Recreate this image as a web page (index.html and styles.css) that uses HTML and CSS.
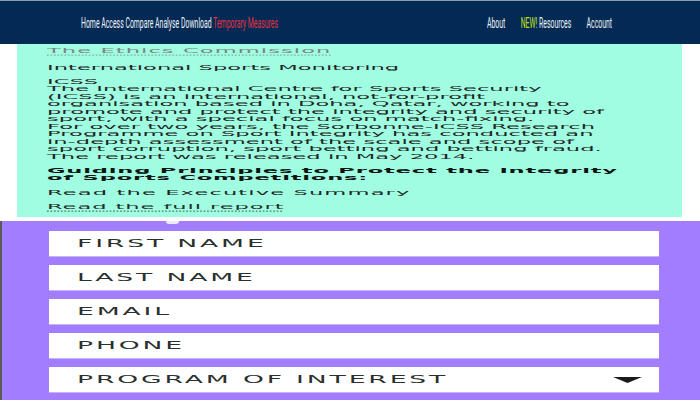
FILE: index.html
```html
<!DOCTYPE html>
<html lang="en">
<head>
<meta charset="utf-8">
<title>ICSS</title>
<link rel="stylesheet" href="styles.css">
</head>
<body>
<header class="topbar">
  <nav class="nav-main">
    <span class="nav-scale">Home Access Compare Analyse Download <a class="nav-red" href="#">Temporary Measures</a></span>
  </nav>
  <nav class="nav-side">
    <span class="nav-scale nav-items">
      <a href="#">About</a>
      <a href="#"><span class="nav-new">NEW!</span> Resources</a>
      <a href="#">Account</a>
    </span>
  </nav>
</header>
<main>
  <section class="info">
    <div class="info-text">
      <p class="line-link"><a class="dotted" href="#">The Ethics Commission</a></p>
      <p class="line-intl">International Sports Monitoring</p>
      <p class="line-para">ICSS<br>The International Centre for Sports Security<br>(ICSS) is an international, not-for-profit<br>organisation based in Doha, Qatar, working to<br>promote and protect the integrity and security of<br>sport, with a special focus on match-fixing.<br>For over two years, the Sorbonne-ICSS Research<br>Programme on Sport Integrity has conducted an<br>in-depth assessment of the scale and scope of<br>sport corruption, sport betting and betting fraud.<br>The report was released in May 2014.</p>
      <p class="line-bold">Guiding Principles to Protect the Integrity<br>of Sports Competitions:</p>
      <p class="line-exec">Read the Executive Summary</p>
      <p class="line-full"><a class="dotted" href="#">Read the full report</a></p>
    </div>
  </section>
  <section class="signup">
    <form class="form">
      <div class="field"><span class="field-label">FIRST NAME</span></div>
      <div class="field"><span class="field-label">LAST NAME</span></div>
      <div class="field"><span class="field-label">EMAIL</span></div>
      <div class="field"><span class="field-label">PHONE</span></div>
      <div class="field field-select"><span class="field-label">PROGRAM OF INTEREST</span>
        <svg class="caret" width="29" height="6" viewBox="0 0 29 6"><polygon points="0,0 29,0 14.5,6" fill="#1c1c1c"/></svg>
      </div>
    </form>
  </section>
</main>
</body>
</html>
```
FILE: styles.css
```css
html, body {
  margin: 0;
  padding: 0;
  background: #ffffff;
  height: 400px;
  overflow: hidden;
}

.topbar {
  display: flex;
  align-items: center;
  height: 43px;
  border-top: 1px solid #8f9aa8;
  background: #022a55;
  padding-left: 81px;
  font-family: Roboto, "Liberation Sans", sans-serif;
  font-size: 13.5px;
  color: #eef2f7;
}

.topbar a {
  color: #eef2f7;
  text-decoration: none;
}

.nav-main {
  flex: 0 0 406px;
  white-space: nowrap;
}

.nav-side {
  flex: 0 0 auto;
  white-space: nowrap;
}

.nav-scale {
  display: inline-block;
  transform: scale(0.51, 1.05);
  transform-origin: left center;
}

.nav-items {
  display: inline-flex;
  gap: 30px;
}

.topbar .nav-red {
  color: #e2323f;
}

.nav-new {
  color: #c8e01c;
}

.info {
  height: 173px;
  margin: 0 18px 4px 17px;
  padding-left: 30px;
  background: #a0fde1;
  overflow: hidden;
}

.info-text {
  width: 370px;
  padding-top: 4.5px;
  font-family: "DejaVu Sans", Verdana, sans-serif;
  font-size: 13px;
  line-height: 12px;
  color: #1e2723;
  white-space: nowrap;
  transform: scale(1.74, 0.6);
  transform-origin: 0 0;
}

.info-text p {
  margin: 0;
}

.dotted {
  color: #7b8682;
  letter-spacing: 0.6px;
  text-decoration: underline dotted;
  text-underline-offset: 3px;
}

.line-full .dotted {
  color: #26302c;
  letter-spacing: 0.52px;
}

.line-intl {
  margin-top: 16.3px !important;
}

.line-para {
  margin-top: 11.4px !important;
  line-height: 12.5px;
}

.line-bold {
  margin-top: 11px !important;
  font-weight: bold;
  letter-spacing: 0.45px;
  color: #0e1512;
}

.line-exec {
  margin-top: 12.7px !important;
  letter-spacing: 0.63px;
}

.line-full {
  margin-top: 11.3px !important;
}

.signup {
  position: relative;
  height: 179px;
  box-sizing: border-box;
  padding: 10px 41px 0 47px;
  border-left: 2px solid #5a5a5a;
  background: #a27dfe;
}

.signup::before {
  content: "";
  position: absolute;
  left: 164px;
  top: 0;
  width: 13px;
  height: 3px;
  border-radius: 0 0 7px 7px;
  background: #efe9ff;
}

.form {
  display: flex;
  flex-direction: column;
  gap: 9px;
  margin: 0;
}

.field {
  display: flex;
  align-items: center;
  height: 25px;
  padding: 0 17px 0 28px;
  background: #ffffff;
  box-shadow: 0 1px 0 #c6b3ff;
}

.field-label {
  display: inline-block;
  font-family: "DejaVu Sans", Verdana, sans-serif;
  font-size: 14px;
  letter-spacing: 1.5px;
  white-space: nowrap;
  color: #2a302c;
  transform: scale(1.9, 0.7);
  transform-origin: left center;
}

.field-select {
  justify-content: space-between;
}

.caret {
  display: block;
}
```
